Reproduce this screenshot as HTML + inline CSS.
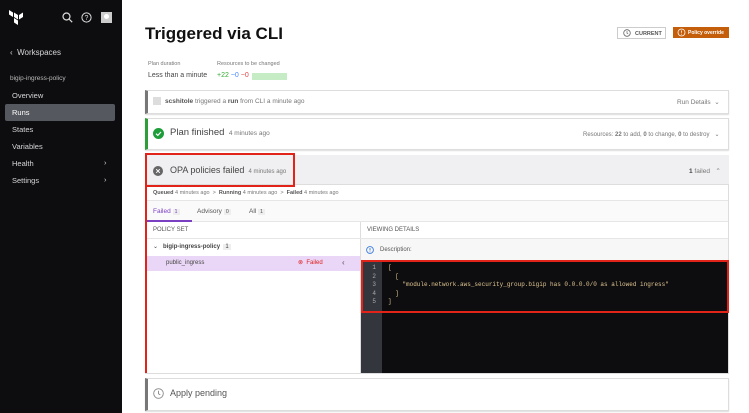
<!DOCTYPE html><html><head><style>
*{box-sizing:border-box;margin:0;padding:0}
body{width:749px;height:413px;overflow:hidden;font-family:"Liberation Sans",sans-serif;background:#fff;position:relative;color:#333}
.a{position:absolute;white-space:nowrap}
.sb{position:absolute;left:0;top:0;width:122px;height:413px;background:#0d0d0f;color:#d6d6d8;font-size:7.5px}
.card{position:absolute;left:145px;width:584px;border:1px solid #ddd;border-left:3px solid #777;box-shadow:0 1px 1px #ddd}
.g{color:#777}
</style></head><body>
<div class="sb">
<svg class="a" style="left:8px;top:9px" width="16" height="16" viewBox="0 0 16 16"><path d="M1 1l4 2.5v4.5L1 5.5z M6 3.5l4 2.5v4.5L6 8z M11 6l4-2.5v4.5L11 10.5z M6 9l4 2.5V16L6 13.5z" fill="#fff"/></svg>
<svg class="a" style="left:62px;top:12px" width="11" height="11" viewBox="0 0 11 11"><circle cx="4.5" cy="4.5" r="3.5" stroke="#ddd" fill="none" stroke-width="1.2"/><path d="M7 7l3.2 3.2" stroke="#ddd" stroke-width="1.2"/></svg>
<svg class="a" style="left:81px;top:12px" width="11" height="11" viewBox="0 0 11 11"><circle cx="5.5" cy="5.5" r="4.6" stroke="#ddd" fill="none" stroke-width="1"/><text x="5.5" y="8" font-size="7" text-anchor="middle" fill="#ddd" font-family="Liberation Sans">?</text></svg>
<div class="a" style="left:101px;top:12px;width:11px;height:11px;background:#ccc"><div class="a" style="left:3px;top:2px;width:5px;height:5px;border-radius:50%;background:#fff"></div></div>
<div class="a" style="left:10px;top:48px;font-size:8px">‹&nbsp;&nbsp;Workspaces</div>
<div class="a" style="left:10px;top:75px;font-size:6.5px;color:#bbb">bigip-ingress-policy</div>
<div class="a" style="left:12px;top:91px">Overview</div>
<div class="a" style="left:5px;top:104px;width:110px;height:17px;background:#55585e;border-radius:2px"></div>
<div class="a" style="left:12px;top:108px;color:#fff">Runs</div>
<div class="a" style="left:12px;top:125px">States</div>
<div class="a" style="left:12px;top:142px">Variables</div>
<div class="a" style="left:12px;top:159px">Health</div><div class="a" style="left:104px;top:158px">›</div>
<div class="a" style="left:12px;top:176px">Settings</div><div class="a" style="left:104px;top:175px">›</div>
</div>

<div class="a" style="left:145px;top:24px;font-size:17px;font-weight:bold;color:#111">Triggered via CLI</div>
<div class="a" style="left:617px;top:27px;width:49px;height:12px;border:1px solid #ccc;font-size:5.5px;font-weight:bold;color:#555;padding:3px 0 0 17px">CURRENT</div>
<svg class="a" style="left:623px;top:29px" width="8" height="8"><circle cx="4" cy="4" r="3.3" fill="none" stroke="#666" stroke-width=".8"/><path d="M4 2v2.2l1.2.8" stroke="#666" stroke-width=".7" fill="none"/></svg>
<div class="a" style="left:673px;top:27px;width:56px;height:11px;background:#c45e0a;color:#fff;font-size:5px;padding:3px 0 0 15px;font-weight:bold;overflow:hidden">Policy override</div>
<svg class="a" style="left:677px;top:28px" width="9" height="9"><circle cx="4.5" cy="4.5" r="3.5" fill="none" stroke="#fff" stroke-width=".8"/><path d="M4.5 2.5v2.3M4.5 5.8v.8" stroke="#fff" stroke-width=".8"/></svg>

<div class="a g" style="left:148px;top:61px;font-size:5.5px">Plan duration</div>
<div class="a" style="left:148px;top:72px;font-size:7px;color:#444">Less than a minute</div>
<div class="a g" style="left:217px;top:61px;font-size:5.5px">Resources to be changed</div>
<div class="a" style="left:217px;top:72px;font-size:7px"><span style="color:#3a3">+22</span> <span style="color:#48f">~0</span> <span style="color:#d44">−0</span></div>
<div class="a" style="left:252px;top:73px;width:35px;height:7px;background:#c6ecc6"></div>

<div class="card" style="top:90px;height:24px"></div>
<div class="a" style="left:153px;top:97px;width:8px;height:8px;background:#ddd"></div>
<div class="a g" style="left:165px;top:98px;font-size:6.5px"><b style="color:#555">scshitole</b> triggered a <b style="color:#555">run</b> from CLI a minute ago</div>
<div class="a g" style="left:677px;top:98px;font-size:6.5px">Run Details &nbsp;⌄</div>

<div class="card" style="top:118px;height:32px;border-left-color:#2e9e3a"></div>
<svg class="a" style="left:153px;top:128px" width="11" height="11"><circle cx="5.5" cy="5.5" r="5.5" fill="#1e9e3a"/><path d="M3 5.7l1.8 1.7L8 4" stroke="#fff" stroke-width="1.2" fill="none"/></svg>
<div class="a" style="left:170px;top:127px;font-size:9.5px;color:#444">Plan finished <span style="font-size:6.5px;color:#777">&nbsp;4 minutes ago</span></div>
<div class="a g" style="left:583px;top:131px;font-size:6px">Resources: <b>22</b> to add, <b>0</b> to change, <b>0</b> to destroy &nbsp;&nbsp;⌄</div>

<div class="a" style="left:145px;top:155px;width:584px;height:219px;border:1px solid #ddd;border-left:none"></div>
<div class="a" style="left:146px;top:155px;width:583px;height:30px;background:#f0f0f2;border-bottom:1px solid #ddd"></div>
<div class="a" style="left:145px;top:153px;width:150px;height:34px;border:2px solid #e2231a"></div>
<div class="a" style="left:145px;top:186px;width:2px;height:187px;background:#e2231a"></div>
<svg class="a" style="left:153px;top:166px" width="10" height="10"><circle cx="5" cy="5" r="5" fill="#666"/><path d="M3.2 3.2l3.6 3.6M6.8 3.2l-3.6 3.6" stroke="#fff" stroke-width="1"/></svg>
<div class="a" style="left:170px;top:165px;font-size:9px;color:#444">OPA policies failed <span style="font-size:6px;color:#777">&nbsp;4 minutes ago</span></div>
<div class="a g" style="left:689px;top:167px;font-size:6.5px"><b style="color:#444">1</b> failed &nbsp;&nbsp;⌃</div>
<div class="a g" style="left:153px;top:190px;font-size:5.5px"><b style="color:#555">Queued</b> 4 minutes ago &nbsp;&gt;&nbsp; <b style="color:#555">Running</b> 4 minutes ago &nbsp;&gt;&nbsp; <b style="color:#555">Failed</b> 4 minutes ago</div>
<div class="a" style="left:147px;top:200px;width:581px;height:22px;background:#fafafa;border-top:1px solid #e6e6e6;border-bottom:1px solid #e6e6e6"></div>
<div class="a" style="left:153px;top:208px;font-size:6.5px;color:#7b3fc4">Failed <span style="background:#eee;padding:0 2px;font-size:5.5px">1</span></div>
<div class="a" style="left:197px;top:208px;font-size:6.5px;color:#555">Advisory <span style="background:#eee;padding:0 2px;font-size:5.5px">0</span></div>
<div class="a" style="left:249px;top:208px;font-size:6.5px;color:#555">All <span style="background:#eee;padding:0 2px;font-size:5.5px">1</span></div>
<div class="a" style="left:147px;top:220px;width:45px;height:2px;background:#7b3fc4"></div>
<div class="a" style="left:360px;top:222px;width:1px;height:151px;background:#ddd"></div>
<div class="a" style="left:147px;top:238px;width:581px;height:1px;background:#e6e6e6"></div>
<div class="a" style="left:153px;top:227px;font-size:6px;color:#555">POLICY SET</div>
<div class="a" style="left:367px;top:227px;font-size:6px;color:#555">VIEWING DETAILS</div>
<div class="a" style="left:153px;top:243px;font-size:6px;color:#444">⌄&nbsp;&nbsp; <b>bigip-ingress-policy</b> &nbsp;<span style="background:#eee;padding:0 2px">1</span></div>
<div class="a" style="left:147px;top:256px;width:213px;height:15px;background:#ead6f6"></div>
<div class="a" style="left:166px;top:260px;font-size:6px;color:#444">public_ingress</div>
<div class="a" style="left:298px;top:259px;font-size:6px;color:#d22">⊗ &nbsp;Failed</div>
<div class="a" style="left:342px;top:258px;font-size:8px;color:#555">‹</div>
<div class="a" style="left:361px;top:239px;width:367px;height:22px;background:#f7f7f8"></div>
<svg class="a" style="left:366px;top:246px" width="8" height="8"><circle cx="4" cy="4" r="3.4" fill="none" stroke="#3a7be0" stroke-width=".9"/><path d="M4 2v2.5M4 5.5v.8" stroke="#3a7be0" stroke-width=".9"/></svg>
<div class="a" style="left:380px;top:247px;font-size:6px;color:#555">Description:</div>
<div class="a" style="left:361px;top:261px;width:367px;height:112px;background:#0d0d10"></div>
<div class="a" style="left:361px;top:261px;width:21px;height:112px;background:#33363d"></div>
<div class="a" style="left:361px;top:264px;width:15px;font:6px/8.5px 'Liberation Mono',monospace;color:#aaa;text-align:right">1<br>2<br>3<br>4<br>5</div>
<div class="a" style="left:388px;top:264px;font:6px/8.5px 'Liberation Mono',monospace;color:#e0c590">[<br>&nbsp;&nbsp;[<br>&nbsp;&nbsp;&nbsp;&nbsp;"module.network.aws_security_group.bigip has 0.0.0.0/0 as allowed ingress"<br>&nbsp;&nbsp;]<br>]</div>
<div class="a" style="left:361px;top:260px;width:368px;height:53px;border:2px solid #e2231a"></div>

<div class="card" style="top:378px;height:33px"></div>
<svg class="a" style="left:153px;top:388px" width="11" height="11"><circle cx="5.5" cy="5.5" r="4.8" fill="none" stroke="#888" stroke-width=".9"/><path d="M5.5 2.8v2.9l1.8 1.2" stroke="#888" stroke-width=".9" fill="none"/></svg>
<div class="a" style="left:170px;top:388px;font-size:9px;color:#555">Apply pending</div>
</body></html>
